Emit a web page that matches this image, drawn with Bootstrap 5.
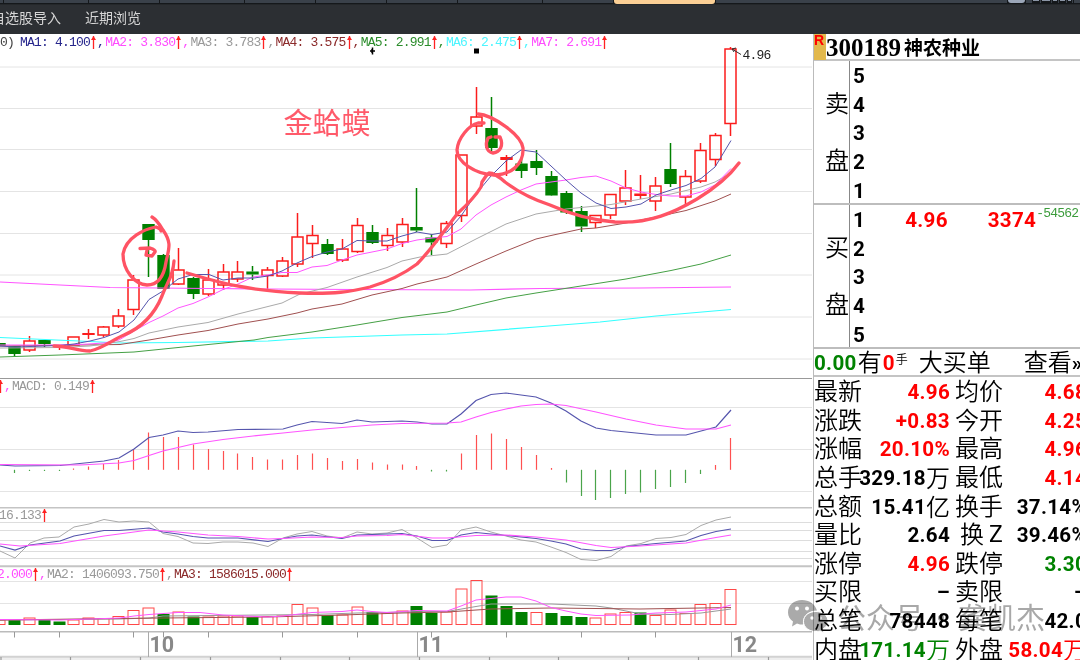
<!doctype html>
<html lang="zh-CN">
<head>
  <meta charset="utf-8">
  <title>300189 神农种业</title>
  <link href="https://cdn.jsdelivr.net/npm/bootstrap@5.3.3/dist/css/bootstrap.min.css" rel="stylesheet">
  <style>
    body { width: 1080px; height: 660px; overflow: hidden; background: #fff; color: #000; font-family: "Liberation Sans", "Noto Sans CJK SC", sans-serif; }
    svg { display: block; overflow: visible; }

    /* barra superior */
    .top-tabs { height: 4px; background: #15181b; gap: 1px; overflow: hidden; }
    .top-tab { height: 3px; background: #3a414a; flex: none; }
    .top-tab.on { background: #fbcf95; height: 4px; border-radius: 0 0 3px 3px; }
    .sub-menu { height: 30px; background: #2c2f33; border-top: 1px solid #24272a; color: #d6d6d6; font-size: 14px; line-height: 27px; }
    .sub-menu span { flex: none; white-space: nowrap; }

    /* graficos */
    .chart-side { width: 813px; flex: none; overflow: hidden; }
    .pane { flex: none; }
    .legend-line { height: 16px; padding-top: 1px; font: 13px/15px "Liberation Mono", monospace; letter-spacing: -.8px; white-space: pre; }
    .legend-line > span { flex: none; display: flex; }
    .legend-line svg { margin: 1px 1px 0 1px; }
    .navy { color: #26268c; } .pink { color: #ff4dff; } .gray { color: #999; }
    .brown { color: #8b2a2a; } .green { color: #2b8c2b; } .aqua { color: #4df5ff; }

    /* painel de cotacao */
    .quote-side { width: 267px; flex: none; border-left: 1px solid #bbb; overflow: hidden; font-family: Roboto, "Liberation Sans", sans-serif; font-weight: bold; font-size: 20.6px; letter-spacing: .3px; }
    .quote-side .han { font-weight: 350; font-size: 24px; font-family: "Noto Sans CJK SC", sans-serif; letter-spacing: 0; }
    .title-row { height: 27px; border-bottom: 2px solid #c4c4c4; letter-spacing: 0; }
    .r-flag { width: 12px; height: 26px; background: #e2b84c; color: #f00; font: bold 14px/13px "Liberation Sans", sans-serif; }
    .code-num { font-family: "Liberation Serif", serif; font-size: 25px; line-height: 27px; margin-right: 3px; }
    .stock-name { font: 600 19px/25px "Noto Sans CJK SC", sans-serif; }
    .book { border-bottom: 2px solid #bdbdbd; }
    .book-side { width: 40px; border-right: 1px solid #888; padding: 11.5px 0 0 11px; line-height: 57.4px; }
    .book-row, .info-row { height: 28.65px; line-height: 29px; }
    .book-row { padding: 1px 0 0 3px; width: 240px; }
    .delta { font: 13px/16px "Liberation Mono", monospace; letter-spacing: -.8px; color: #3c9c3c; }
    .deal-row { height: 28px; line-height: 28px; border-bottom: 2px solid #c4c4c4; width: 300px; white-space: pre; }
    .info-row { width: 274px; white-space: nowrap; }
    .info-cell { width: 137px; flex: none; position: relative; display: flex; }
    .info-cell .han { margin-top: -2px; }
    .info-cell .val { position: absolute; right: 1px; top: 0; display: flex; padding-top: 1px; }
    .up { color: #f00; } .down { color: #008200; }

    .wm { position: absolute; left: 787px; top: 598px; color: #a8a8a8; mix-blend-mode: multiply; font: 400 29px/36px "Noto Sans CJK SC", sans-serif; white-space: pre; }
  </style>
</head>
<body>
  <div class="top-tabs d-flex" id="tabs"></div>
  <div class="sub-menu d-flex">
    <span style="margin-left:-9px">自选股导入</span>
    <span class="ms-4">近期浏览</span>
  </div>

  <div class="d-flex" style="height:626px">
    <div class="chart-side d-flex flex-column">
      <div class="pane">
        <div class="legend-line d-flex" id="legMain"></div>
        <svg id="main" width="813" height="328" viewBox="0 50 813 328"></svg>
      </div>
      <div class="pane">
        <div class="legend-line d-flex" id="legMacd"></div>
        <svg id="macd" width="813" height="113" viewBox="0 394 813 113"></svg>
      </div>
      <div class="pane">
        <div class="legend-line d-flex" id="legKdj"></div>
        <svg id="kdj" width="813" height="43" viewBox="0 523 813 43"></svg>
      </div>
      <div class="pane">
        <div class="legend-line d-flex" id="legVol"></div>
        <svg id="vol" width="813" height="49" viewBox="0 582 813 49"></svg>
      </div>
      <svg id="axis" width="813" height="29" viewBox="0 631 813 29"></svg>
    </div>

    <div class="quote-side">
      <div class="title-row d-flex">
        <div class="r-flag">R</div>
        <div class="code-num">300189</div>
        <div class="stock-name">神农种业</div>
      </div>
      <div class="book d-flex" style="height:144px">
        <div class="book-side han">卖<br>盘</div>
        <div id="asks"></div>
      </div>
      <div class="book d-flex" style="height:144px">
        <div class="book-side han">买<br>盘</div>
        <div id="bids"></div>
      </div>
      <div class="deal-row d-flex"><span class="down">0.00</span><span class="han" style="margin:-2px 0 0 1px">有</span><span class="up" style="margin-left:1px">0</span><span class="han" style="font-size:12px;line-height:20px;margin-left:1px">手</span><span class="han" style="margin:-2px 0 0 11px">大买单</span><span class="han" style="margin:-2px 0 0 33px">查看</span><span>»</span></div>
      <div id="info"></div>
    </div>
  </div>

  <div class="wm d-flex">
    <svg width="42" height="36" viewBox="0 0 42 36" class="me-2">
      <path fill="#aaa" d="M15 2C7 2 1 7 1 14.500c0 4 2 7 5 9l-1 5 5-3c2 1 4 1 6 1-1-8 5-14 14-14C28 6 22 2 15 2z"/>
      <path fill="#aaa" stroke="#fff" d="M29 13.500c-7 0-12.500 4-12.500 10S22 33.500 29 33.500c2 0 3 0 4-.5l4 2-1-4c3-2 5-4 5-7.500 0-6-5-10-12-10z"/>
      <g fill="#fff"><circle cx="10" cy="10.500" r="2"/><circle cx="20" cy="10.500" r="2"/><circle cx="25" cy="20" r="1.700"/><circle cx="33" cy="20" r="1.700"/></g>
    </svg><span>公众号</span><span style="width:34px;text-align:center">·</span><span>龚凯杰</span>
  </div>

  <script src="https://cdn.jsdelivr.net/npm/bootstrap@5.3.3/dist/js/bootstrap.bundle.min.js"></script>
  <script>
    const $ = id => document.getElementById(id);
    const NAVY = '#5555ad', PINK = '#ff55ff', GRAY = '#aaa', BROWN = '#a05050', GREEN = '#45a045', AQUA = '#3ff';
    const X = i => Math.round(149 + 14.915 * (i - 10)) - 0.5;

    // abas do topo
    $('tabs').innerHTML = [3, 84, 70, 84, 70, 70, 70, 84, 70].map(w => `<div class="top-tab" style="width:${w}px"></div>`).join('') +
      '<div class="top-tab on" style="width:101px"></div><div class="top-tab flex-fill"></div>' +
      '<div class="top-tab" style="width:17px;background:#9ba6b8;border-radius:0 0 3px 3px"></div>' +
      '<div class="top-tab" style="width:6px"></div>' +
      [6, 8, 4, 5, 3].map(w => `<div class="top-tab" style="width:${w}px;height:1px;background:#8b95a5"></div><div class="top-tab" style="width:1px"></div>`).join('') +
      '<div class="top-tab" style="width:6px"></div>';

    // legendas
    const arrow = '<svg width="5" height="13" viewBox="0 0 5 13"><path d="M2.500 0V13" stroke="#f22" stroke-width="1.300" fill="none"/><path d="M0 4L2.500 0 5 4z" fill="#f22"/></svg>';
    const leg = (cls, txt, w, comma = ',') => `<span class="${cls}" style="width:${w}px">${txt}${arrow}${comma}</span>`;
    $('legMain').innerHTML = '<span style="width:20px;margin-left:-7px;margin-right:7px;color:#444">50)</span>' +
      leg('navy', 'MA1: 4.100', 85.2) + leg('pink', 'MA2: 3.830', 85.2) + leg('gray', 'MA3: 3.783', 85.2) +
      leg('brown', 'MA4: 3.575', 85.2) + leg('green', 'MA5: 2.991', 85.2) + leg('aqua', 'MA6: 2.475', 85.2) + leg('pink', 'MA7: 2.691', 85.2, '');
    $('legMacd').innerHTML = '<span class="pink" style="width:15px;margin-left:-3px">' + arrow + ',</span>' + leg('gray', 'MACD: 0.149', 90, '');
    $('legKdj').innerHTML = '<span style="margin-left:-1px" class="gray">16.133' + arrow + '</span>';
    $('legVol').innerHTML = '<span style="margin-left:-3px;width:50px" class="pink">2.000' + arrow + ',</span>' +
      leg('gray', 'MA2: 1406093.750', 127) + leg('brown', 'MA3: 1586015.000', 127, '');

    const hline = (y, c = '#e4e4e4', w = 1) => `<path d="M0 ${y}H812" stroke="${c}" stroke-width="${w}"/>`;
    const line = (pts, c, w = 1) => `<polyline points="${pts}" fill="none" stroke="${c}" stroke-width="${w}"/>`;
    const seg = (x, a, b, c, w = 1.5) => `<path d="M${x} ${a}V${b}" stroke="${c}" stroke-width="${w}"/>`;

    // velas: tipo, maxima, topo, base, minima (s = corpo vermelho cheio)
    const candles = `g 343 343 346 346|g 346 346 354 356|r 336 341 350 352|g 340 340 344 347|s 345 345 347 350|r 337 337 345 345|s 329 333 335 339|r 326 327 335 337|r 309 316 326 328|r 275 280 309.500 315
g 224 224 240 277|g 254 255 289 289|r 248 270 284 285|g 277 278 294 299|r 269 280 294 296|r 264 272 285 290|r 261 272 279 282|g 266 271.500 274.500 280|r 267 270 275.500 290|r 257 261 276 277
r 213 237 264 267|r 225 235.500 243.500 258|g 239 244 254 255|r 239 249 260 262|r 218 225.500 251.500 253|g 225 232 243 244|r 228 235.500 245.500 251|r 218 224.500 242 247|g 188 227 230.500 232|g 234 237.500 242.500 255
r 221 223.500 243.500 248|r 155 155 215.500 222|r 87 117 126 134|g 97 128 148 152|s 155 157 160 176|g 159 163.500 171 178|g 150 161 168 175|g 171 176 195.500 196|g 191 193 212.500 214|g 206 211 226.500 232
r 215 215.500 222.500 228|r 194 194.500 215 219|r 170 188 201 205|s 175 193.500 196 199|r 177 186 201 211|g 143 169 184 187|r 170 176.500 197 205|r 143 150.500 181 183|r 133 135.500 159.500 166|r 47 49 123.500 136`.split(/[|\n]/).map(s => s.split(' '));

    let s = [67, 108.5, 149.5, 191.5, 233.5, 275, 317, 359].map(y => hline(y)).join('');
    candles.forEach(([t, ...v], i) => {
      const [hi, top, bot, lo] = v.map(Number), x = X(i);
      const c = t === 'g' ? '#008000' : '#fb1c1c';
      s += seg(x, hi, top, c) + seg(x, bot, lo, c);
      s += t === 'r'
        ? `<rect x="${x - 5.5}" y="${top}" width="11" height="${bot - top}" fill="none" stroke="${c}" stroke-width="1.500"/>`
        : `<rect x="${x - 6.2}" y="${top}" width="12.400" height="${bot - top}" fill="${c}"/>`;
    });
    // medias moveis
    s += line('0,337.500 90,341.500 119,343 178,342.500 268,341 312,338 402,335 447,334 536,327 600,322 656,316 731,309.500', AQUA, 1.2);
    s += line('0,282 80,286 110,287.500 208,288.500 268,289 357,289.500 470,290 540,288.500 640,288 731,287', PINK, 1.2);
    s += line('0,357 60,355 134,352 193,346 254,340 268,337.500 312,332 357,325 402,317.500 447,312 476,305 506,298 536,293 581,286 626,279 671,270.500 701,264 731,255', GREEN);
    s += line('0,346 80,345 120,344.500 149,340 178,335 208,330.500 238,324 268,319 297,313 312,309 342,304 372,295 402,288.500 417,284 447,277 476,264 506,251 536,239 551,235.500 581,229 596,228 626,223 656,217 686,210.500 715,201 731,194', BROWN);
    s += line('0,348 60,347.500 90,346 120,341.500 134,338.500 149,333 178,327 208,322.500 238,314 268,306.500 282,303 300,294 327,287.500 357,277 387,267.500 402,261 420,257 447,254 476,239 506,224 536,214 566,209 581,207.500 596,206 611,204.500 641,199 671,194 701,187 715,182 731,173', GRAY);
    s += line('0,345 60,345 80,344.500 104,343 119,340 134,331 149,322.500 163,316 178,308 193,303.500 208,297 223,289.500 238,284 253,277 268,275 282,272.500 297,272.500 312,267 327,265.500 342,260 357,255 372,252 387,249 402,243.500 417,240 432,238 447,236.500 461,229 476,215 491,205 506,197 521,190 536,184 566,180 581,177.500 596,176 611,181 626,188 641,192 656,194.500 671,196 686,196 701,192 715,185 731,168.500', PINK);
    s += line('0,346 15,347 60,345.500 74,344 90,341 104,337.500 119,332 134,320 149,299.500 163,291 178,279 193,274.500 209,274.500 223,280 238,278 254,278 268,276 282,271 297,263 312,256.500 327,252 342,249 357,240.500 372,241 387,241 402,236 417,232 432,234.500 447,232 461,216 476,194 491,176 506,161 521,150 536,152 551,166 566,180 581,193 596,203 611,208.500 626,207 641,204 656,195 671,190 686,185.500 701,178.500 715,167 731,140.500', NAVY);
    // marcas e preco maximo
    s += '<path d="M372.500 47.500V54.500M370 51H375M372 49V53" stroke="#000" stroke-width="1.500"/><path d="M474 48.500h5v5h-5z"/><path d="M741 54.500L732 49M736 48L732 49L734 52" stroke="#333" fill="none"/>';
    s += '<text x="742.500" y="59" font-family="Liberation Mono, monospace" font-size="13" letter-spacing="-.8" fill="#222">4.96</text>';
    // anotacoes a mao
    s += `<g fill="none" stroke="#ff5364" stroke-width="3.300" stroke-linecap="round" stroke-linejoin="round">
      <path d="M152 217Q157 220 163 230C172 243 169 248 166 262C164 276 158 285 147 285C134 284 123 270 123 254C126 237 145 229 156 227Q161 229 161 231"/>
      <path d="M140 248.500L150 248Q156 250 155 252L152 256L146 255L147 250"/>
      <path d="M54 346C70 346 76 351 90 351C104 348 112 340 124 335C143 327 155 313 162 296C167 282 173 277 174 261"/>
      <path d="M187 273C215 281 240 290 300 293C335 294 350 292 370 287C390 281 405 273 417 264C430 251 445 230 457 214C468 204 475 197 481 187L482 182L486 176L489 173Q495 173 505 182C517 191 535 200 550 205C570 214 590 220 615 222C650 224 675 212 697 199Q725 182 739 163"/>
      <path d="M478 114C492 115 521 134 523 148C524 165 510 175 494 175C475 174 457 162 457 150C458 138 469 125 478 123L484 123"/>
      <path d="M495 137L500 137C504 146 500 152 493 153C486 152 485 144 488 138L491 137"/></g>`;
    s += '<text x="283.500" y="133.500" font-family="Noto Sans CJK SC, sans-serif" font-size="29" fill="#ff5a6a">金蛤蟆</text>';
    $('main').innerHTML = s;

    // MACD
    const hist = [0, 473, 471, 471, 471, 468.5, 466.5, 464, 460, 449, 432.5, 437, 437, 444.5, 449, 451, 453.5, 457, 459.5, 459.5, 455, 453.5, 458, 461, 459, 462.5, 464.5, 464.5, 466, 471.5, 471.5, 453.5, 435, 433.5, 439, 447, 455, 468, 482.5, 496, 500, 498, 494, 492.5, 489, 487, 483, 474, 465, 438];
    s = hline(378.5, '#999') + [407.5, 449.5, 491.5].map(y => hline(y)).join('');
    hist.forEach((y, i) => { if (y) s += seg(X(i), 469.8, y, y > 470 ? '#4aa44a' : '#ff5050', 1.2); });
    s += line('0,465 15,466 60,465.500 75,464 104,461 119,458 134,449 149,437.500 163,435 178,431 193,432.500 208,432 238,429.500 283,429 297,425 312,421.500 342,423.500 357,420 372,422 402,421 417,422 432,424 447,424 461,414 476,400.500 491,394.500 506,393 521,395 536,397 551,403 566,411 581,421 596,428 611,430.500 626,432 656,435 686,435 701,431 716,427 731,410', NAVY, 1.2);
    s += line('0,464.500 80,465 119,463 134,460.500 149,455.500 163,451 178,447.500 193,444 223,439.500 253,436 283,433 312,430 342,427.500 372,425 402,423.500 447,423 461,422 476,417 491,412.500 506,409 521,406 536,404.500 551,404 566,405.500 596,412 626,419 656,425 686,429 716,429 731,425', PINK, 1.2);
    $('macd').innerHTML = s;

    // KDJ
    s = hline(507.8, '#c4c4c4', 1.5) + [522.5, 530.5, 540.5, 551.5, 558.5].map(y => hline(y, '#ddd')).join('');
    s += line('0,551 15,558 30,543 44,538 59,537 74,527 89,524 104,519.500 119,522 134,521 149,522 163,533.500 178,536.500 193,543 208,543.500 223,542 238,542 253,543 268,546.500 283,538 297,534 312,531.500 327,536 342,538 357,532 372,534 387,533 402,529.500 417,538 432,547.500 447,545 461,530 476,527 491,532 506,536 521,540 536,542 551,547 566,552.500 581,559.500 596,560.500 611,556.500 626,546 641,543.500 656,538.500 671,537.500 686,534.500 701,525.500 716,520 731,517', GRAY);
    s += line('0,546 15,550 30,545 60,541 74,536 104,530.500 119,530.500 149,528 163,532 178,534 193,536.500 208,538 238,538 268,541.500 283,538.500 297,536 312,535 342,538.500 357,535 402,533.500 417,536 432,540.500 447,540.500 461,535 476,532.500 506,535.500 536,538.500 551,541 566,544 581,549 596,550.500 611,550.500 626,546.500 656,543.500 686,541 701,535.500 716,531.500 731,529', NAVY, 1.2);
    s += line('0,544 20,546 60,543.500 104,536 149,530 178,532 208,535 238,536.500 268,539 283,538.500 312,537 342,537.500 357,536 387,535.500 402,534.500 432,538 447,538 476,535.500 506,535 536,537 566,540 596,545.500 611,547.500 640,546 686,543 716,537.500 731,535', PINK, 1.2);
    $('kdj').innerHTML = s;

    // volume
    const tops = [620, 620, 618, 620, 621.5, 620, 618, 618.5, 616.5, 610.5, 608, 614, 612, 616.5, 617, 616, 616, 617, 616.5, 616, 604.5, 608, 615, 615, 607, 612, 613, 611, 606, 613, 612, 589, 580.5, 595.5, 606, 612, 612.5, 613, 616, 617, 618, 614, 612.5, 612.5, 615.5, 610, 613.5, 604.5, 603.5, 589.5];
    const greens = [1, 3, 4, 11, 13, 17, 22, 25, 28, 29, 33, 34, 35, 37, 38, 39, 43];
    s = hline(566.3, '#c4c4c4', 2) + hline(581.5) + hline(603.5);
    tops.forEach((y, i) => {
      s += greens.includes(i)
        ? `<rect x="${X(i) - 6}" y="${y}" width="12" height="${625 - y}" fill="#008000"/>`
        : `<rect x="${X(i) - 5.5}" y="${y}" width="11" height="${624.5 - y}" fill="none" stroke="#ff4848"/>`;
    });
    s += line('0,620 120,619 149,618 163,616 312,614.500 357,613 432,611.500 447,611.500 476,606.500 491,604 551,604 596,606 611,608 641,614 670,614.500 701,613 731,609', '#999');
    s += line('0,620 120,618.500 163,618 268,617 342,615 402,613 447,612 491,609 551,608 640,609 731,607.500', BROWN);
    s += line('0,619.500 60,620 120,618 134,616 149,614.500 178,612.500 200,612.500 223,615 268,617 283,616 312,612.500 342,611.500 357,610 372,611.500 387,612.500 417,610.500 447,611 461,606 476,600 491,598.500 506,597 521,597 536,601 551,607.500 566,611 581,614 596,615.500 630,615 656,613 686,612 716,609 731,605', PINK);
    $('vol').innerHTML = s;

    // eixo de datas
    s = hline(631.8, '#bbb', 1.5) + '<path d="M0 658.500H812" stroke="#eee" stroke-width="3"/>' + hline(656.8, '#d2d2d2', 2);
    [1, 4, 9, 11, 14, 19, 24, 29, 34, 39, 44].forEach(i => s += seg(X(i), 632, 637.5, '#999', 1));
    [1, 70.5, 140.5, 210.5, 280.5, 349.5, 419.5, 489.5, 558.5, 628.5, 698.5, 768.5].forEach(x => s += seg(x, 657, 660, '#999', 1.2));
    [[148.5, '10'], [417.5, '11'], [731.5, '12']].forEach(([x, m]) => {
      s += seg(x, 632, 657, '#aaa', 1) + `<text x="${x + 1}" y="651.500" font-family="Roboto, sans-serif" font-weight="bold" font-size="21.500" fill="#888">${m}</text>`;
    });
    $('axis').innerHTML = s;

    // livro de ofertas
    $('asks').innerHTML = [5, 4, 3, 2, 1].map(n => `<div class="book-row">${n}</div>`).join('');
    $('bids').innerHTML = [1, 2, 3, 4, 5].map(n => `<div class="book-row d-flex"><span>${n}</span>` +
      (n === 1 ? '<span class="up" style="margin-left:40px">4.96</span><span class="up" style="margin-left:40px">3374</span><span class="delta">-54562</span>' : '') + '</div>').join('');

    // dados da cotacao
    const han = t => t.replace(/[\u4e00-\u9fff]+/g, '<span class="han">$&</span>');
    const rows = [
      ['最新', '4.96', 'up', '均价', '4.68', 'up'],
      ['涨跌', '+0.83', 'up', '今开', '4.25', 'up'],
      ['涨幅', '20.10%', 'up', '最高', '4.96', 'up'],
      ['总手', '329.18万', '', '最低', '4.14', 'up'],
      ['总额', '15.41亿', '', '换手', '37.14%', ''],
      ['量比', '2.64', '', '换Z', '39.46%', ''],
      ['涨停', '4.96', 'up', '跌停', '3.30', 'down'],
      ['买限', '–', '', '卖限', '–', ''],
      ['总笔', '78448', '', '每笔', '42.0', ''],
      ['内盘', '171.14万', 'down', '外盘', '58.04万', 'up']
    ];
    $('info').innerHTML = rows.map(r => '<div class="info-row d-flex">' + [0, 3].map(k => {
      const lab = r[k] === '换Z' ? '<span class="han" style="margin-left:5px">换</span><span style="margin-left:5px;font-weight:400;font-size:23px">Z</span>' : han(r[k]);
      return `<div class="info-cell" style="padding-left:${k ? 4 : 0}px">${lab}<span class="val ${r[k + 2]}">${han(r[k + 1])}</span></div>`;
    }).join('') + '</div>').join('');
  </script>
</body>
</html>
